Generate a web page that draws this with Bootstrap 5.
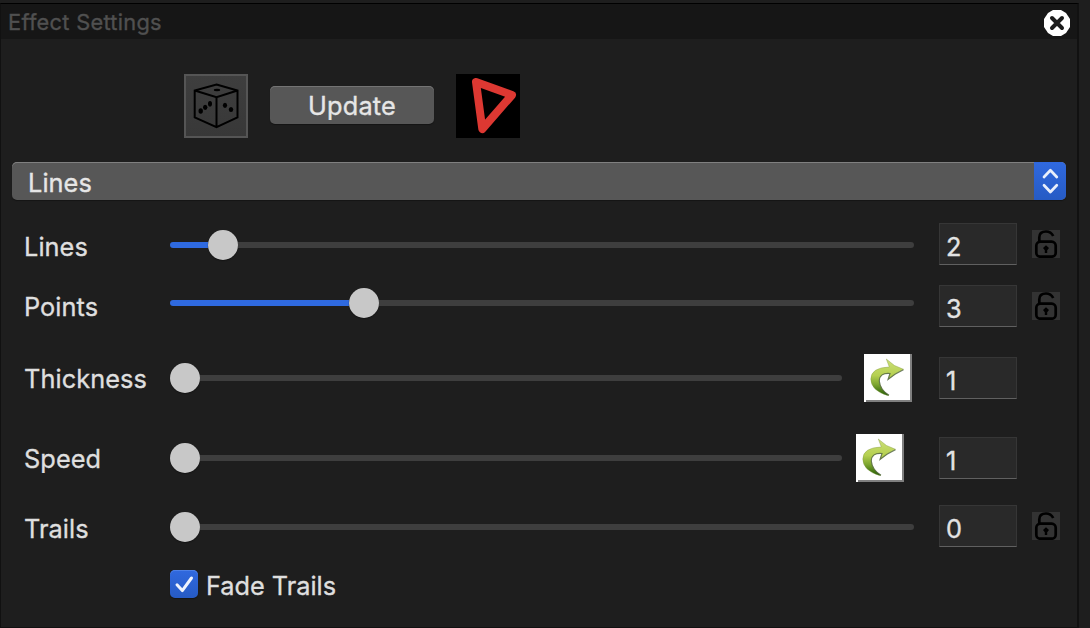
<!DOCTYPE html>
<html lang="en">
<head>
<meta charset="utf-8">
<title>Effect Settings</title>
<link href="https://cdn.jsdelivr.net/npm/bootstrap@5.3.0/dist/css/bootstrap.min.css" rel="stylesheet">
<style>
body{background:#1e1e1e;color:#dfdfdf;font-family:Inter,"Liberation Sans",sans-serif;font-size:25.3px;line-height:30px;overflow:hidden;height:628px;-webkit-text-stroke:.35px currentColor}
svg{display:block;flex:none}
.dock{height:628px;border-top:1px solid #1e1e1e}
.dock-top{height:2px;background:#1e1e1e}
.panel{width:1079px;height:625px;border:1px solid #111;border-right:2px solid #111;border-top-color:#000}
.panel-head{height:35px;background:#161616;color:#505050;font-size:21.8px;letter-spacing:.28px;padding:0 7px 0 7px}
.tools{padding:35px 0 0 183px;height:123px}
.tool-row{height:64px;gap:22px}
.die{width:64px;height:64px;border:2px solid #555;background:linear-gradient(#3e3e3e,#383838)}
.push{width:164px;height:38px;margin-top:-2px;border:0;border-radius:5px;background:#575757;color:#e6e6e6;box-shadow:inset 0 1px #747474,0 1px 1px #141414;font-size:25.3px;line-height:38px;padding:1px 0 0;letter-spacing:.2px;-webkit-text-stroke:.35px currentColor}
.picker{width:1054px;height:38px;margin-left:11px;border-radius:5px;background:#575757;color:#e6e6e6;box-shadow:inset 0 1px #808080,0 1px 1px #141414;padding-left:16px}
.picker-cap{width:32px;height:38px;background:linear-gradient(#3069df,#265bc4);border-radius:0 5px 5px 0}
.params{padding:23px 0 0 23px}
.param{display:grid;grid-template-columns:146px 744px 25px 78px 15px 28px;height:42px;align-items:center}
.param-name{white-space:nowrap;letter-spacing:.08px}
.slider{display:flex;align-items:center;height:30px}
.bar{height:6px;background:#3e3e3e;border-radius:0 3px 3px 0;flex:1}
.bar-on{height:6px;background:#2f6ae0;border-radius:3px 0 0 3px}
.knob{width:30px;height:30px;border-radius:50%;background:#c8c8c8;box-shadow:0 1px 1px #141414;flex:none}
.reset{width:48px;height:48px;background:#fff}
.field{grid-column:4;height:42px;background:#292929;border:1px solid #363636;border-bottom:1px solid #606060;padding:8px 6px 0;color:#e3e3e3;line-height:30px}
.lock{grid-column:6;background:#333}
.tick{width:28px;height:28px;border-radius:5px;background:linear-gradient(#3069df,#265bc4);box-shadow:inset 0 1px #4d80e6,0 1px 1px #141414}
</style>
</head>
<body>
<svg width="0" height="0" class="position-absolute">
<defs>
<linearGradient id="leaf" x1="0" y1="0" x2="0" y2="1"><stop offset="0" stop-color="#cde07a"/><stop offset=".45" stop-color="#b5d050"/><stop offset=".7" stop-color="#7da52f"/><stop offset="1" stop-color="#245c05"/></linearGradient>
<symbol id="unlock" viewBox="0 0 28 28"><g fill="none" stroke="#000" stroke-width="2.7"><rect x="4.3" y="11.7" width="19.4" height="15" rx="4"/><path d="M7.3 12V7.5Q7.3 1.5 14 1.5Q19 1.5 21.2 6"/></g><path d="M14 15.2 17 18 15.2 20.2V23H12.8V20.2L11 18Z"/></symbol>
<symbol id="redo" viewBox="0 0 48 48"><path fill="#808080" d="M46 0h2v48H2v-2h44z"/><path d="M22.3 5 30.5 11.5 39.5 15.3 32 19.5 24 25.5 26 19.5Q15.5 18.5 15.3 27Q16 35.5 25 41.3L23.5 41.5Q7 36.5 6.8 25Q7 13.5 25.3 13Z" fill="url(#leaf)" stroke="#83983f" stroke-opacity=".5" stroke-width=".8"/><path d="M39.5 15.8 31 20.3 24 25.5 26 19.5Q15.5 18.5 15.3 27Q16 35.5 25 41.3" fill="none" stroke="#4d6040" stroke-width="1.1" stroke-opacity=".75"/></symbol>
</defs>
</svg>
<main class="dock">
<div class="dock-top"></div>
<section class="panel">
<header class="panel-head d-flex align-items-center justify-content-between">
<span>Effect Settings</span>
<svg width="26" height="26" viewBox="0 0 26 26" style="margin-top:3px"><path d="M9 0h8l5 3 4 6v8l-4 6-5 3H9l-5-3-4-6V9l4-6z" fill="#fff"/><path d="M8 8l10 10M18 8L8 18" stroke="#1b1b1b" stroke-width="4" stroke-linecap="round"/></svg>
</header>
<div class="tools">
<div class="tool-row d-flex align-items-center">
<div class="die"><svg width="60" height="60" viewBox="2 2 60 60"><path d="M32.5 10.5 53.5 16.5V43.3L32.5 53.2 10.7 43.3V16.5ZM10.7 16.5 32.5 23.3 53.5 16.5M32.5 23.3V53" fill="none" stroke="#000" stroke-width="2"/><ellipse cx="33" cy="16" rx="3.2" ry="1.2"/><g><ellipse cx="16.7" cy="37" rx="2.2" ry="2.8"/><ellipse cx="21.2" cy="33.3" rx="2.2" ry="2.6"/><ellipse cx="26" cy="29.7" rx="2" ry="2.8"/><ellipse cx="41" cy="31.3" rx="2.1" ry="2.6"/><ellipse cx="47" cy="35.5" rx="2.2" ry="2.6"/></g></svg></div>
<button class="push">Update</button>
<svg width="64" height="64" viewBox="0 0 64 64"><rect width="64" height="64"/><path d="M20 8 56 21 26.3 55Z" fill="none" stroke="#dd3832" stroke-width="8" stroke-linejoin="round"/></svg>
</div>
</div>
<div class="picker d-flex align-items-center justify-content-between">
<span class="pt-1 param-name">Lines</span>
<div class="picker-cap"><svg width="32" height="38" fill="none" stroke="#e9effb" stroke-width="2.7" stroke-linecap="round" stroke-linejoin="round"><path d="M10 15 16.4 8.3 22.8 15M10 23.3 16.4 30 22.8 23.3"/></svg></div>
</div>
<div class="params">
<div class="param">
<span class="param-name" style="padding-top:5px">Lines</span>
<div class="slider" style="margin-top:2px"><div class="bar-on" style="width:38px"></div><div class="knob"></div><div class="bar"></div></div>
<div class="field">2</div><svg class="lock" width="28" height="28"><use href="#unlock"/></svg>
</div>
<div class="param" style="margin-top:20px">
<span class="param-name" style="padding-top:2px">Points</span>
<div class="slider" style="margin-top:-6px"><div class="bar-on" style="width:179px"></div><div class="knob"></div><div class="bar"></div></div>
<div class="field">3</div><svg class="lock" width="28" height="28"><use href="#unlock"/></svg>
</div>
<div class="param" style="margin-top:30px">
<span class="param-name" style="padding-top:2px">Thickness</span>
<div class="slider"><div class="knob"></div><div class="bar"></div><svg class="reset" width="48" height="48" style="margin:0 2px 0 22px"><use href="#redo"/></svg></div>
<div class="field">1</div>
</div>
<div class="param" style="margin-top:38px">
<span class="param-name" style="padding-top:2px">Speed</span>
<div class="slider"><div class="knob"></div><div class="bar"></div><svg class="reset" width="48" height="48" style="margin:0 10px 0 14px"><use href="#redo"/></svg></div>
<div class="field">1</div>
</div>
<div class="param" style="margin-top:26px">
<span class="param-name" style="padding-top:5px">Trails</span>
<div class="slider" style="margin-top:2px"><div class="knob"></div><div class="bar"></div></div>
<div class="field">0</div><svg class="lock" width="28" height="28"><use href="#unlock"/></svg>
</div>
<label class="d-flex align-items-center" style="margin:23px 0 0 146px;gap:8px;height:28px">
<span class="tick"><svg width="28" height="28" fill="none" stroke="#eef3fd" stroke-width="3" stroke-linecap="round" stroke-linejoin="round"><path d="M7 14.8 12.3 20.6 21.5 8"/></svg></span>
<span class="pt-1">Fade Trails</span>
</label>
</div>
</section>
</main>
<script src="https://cdn.jsdelivr.net/npm/bootstrap@5.3.0/dist/js/bootstrap.bundle.min.js"></script>
</body>
</html>
